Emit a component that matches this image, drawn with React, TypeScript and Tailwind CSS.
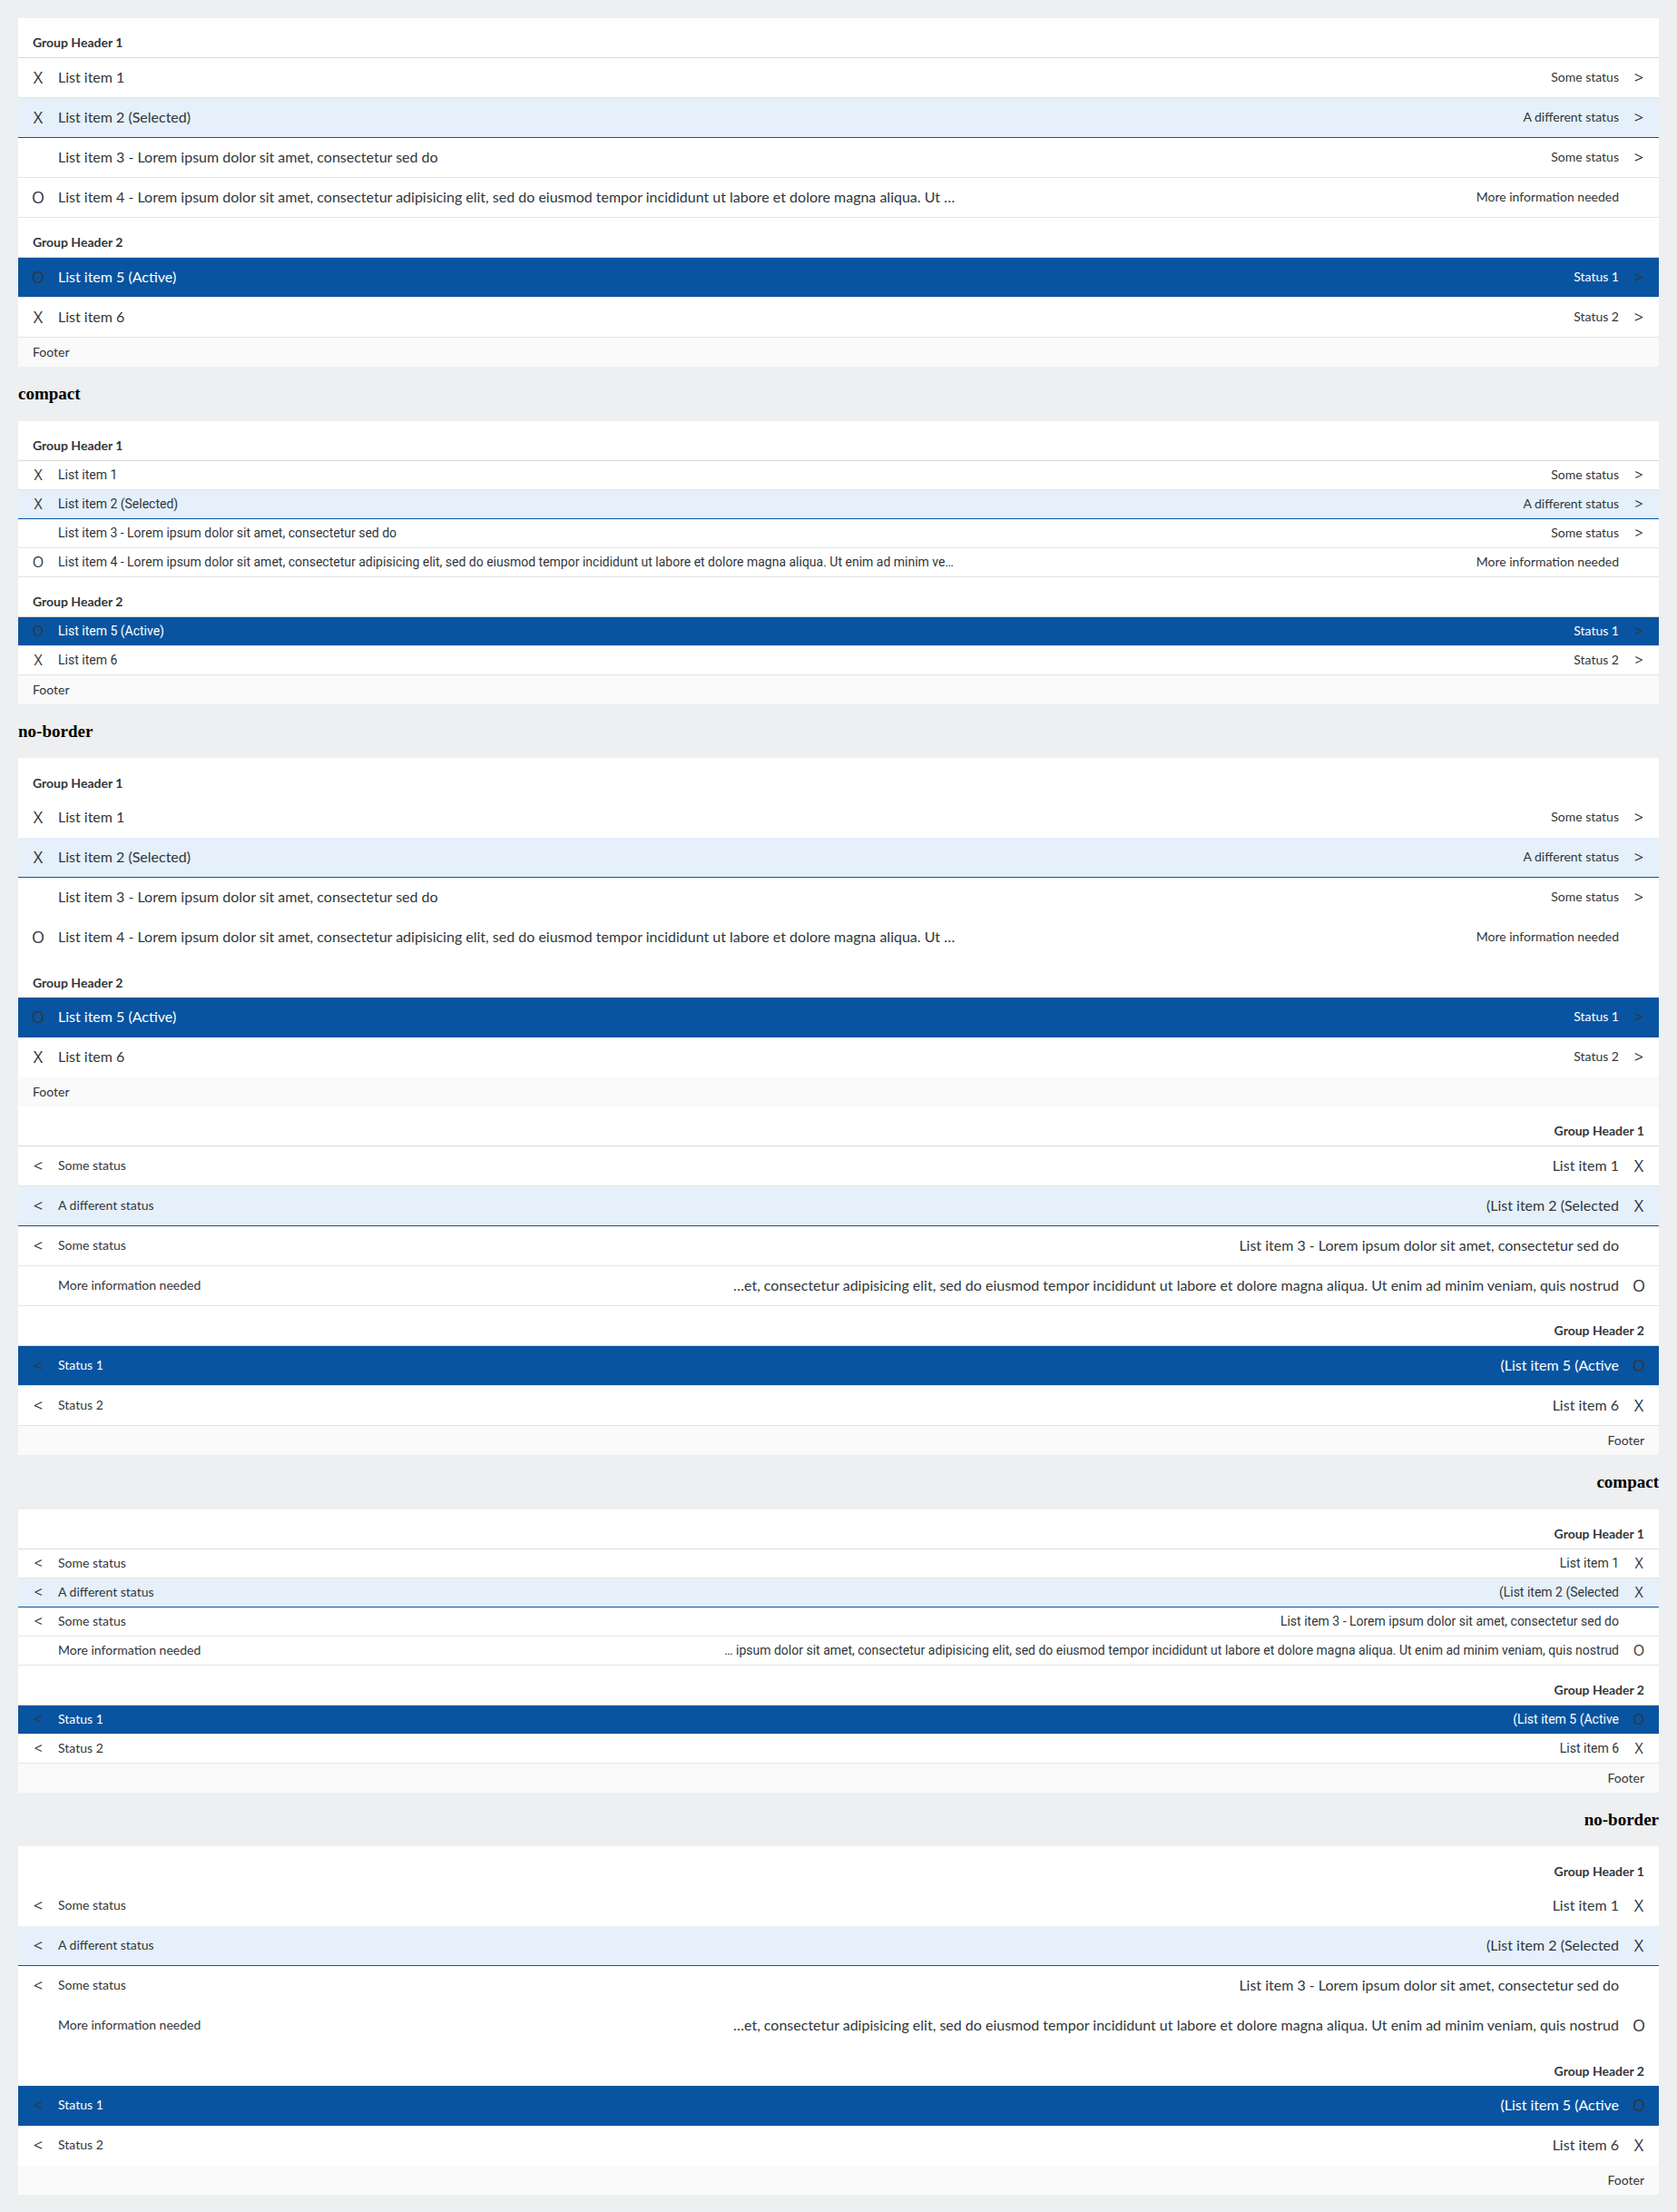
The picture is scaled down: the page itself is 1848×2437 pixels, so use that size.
type Item = {
  title: string;
  status: string;
  icon?: string;
  arrow?: boolean;
  state?: "selected" | "active";
};

type Variant = {
  compact?: boolean;
  borderless?: boolean;
  rtl?: boolean;
};

const groups: { header: string; items: Item[] }[] = [
  {
    header: "Group Header 1",
    items: [
      { icon: "X", title: "List item 1", status: "Some status", arrow: true },
      { icon: "X", title: "List item 2 (Selected)", status: "A different status", arrow: true, state: "selected" },
      { title: "List item 3 - Lorem ipsum dolor sit amet, consectetur sed do", status: "Some status", arrow: true },
      {
        icon: "O",
        title:
          "List item 4 - Lorem ipsum dolor sit amet, consectetur adipisicing elit, sed do eiusmod tempor incididunt ut labore et dolore magna aliqua. Ut enim ad minim veniam, quis nostrud",
        status: "More information needed",
      },
    ],
  },
  {
    header: "Group Header 2",
    items: [
      { icon: "O", title: "List item 5 (Active)", status: "Status 1", arrow: true, state: "active" },
      { icon: "X", title: "List item 6", status: "Status 2", arrow: true },
    ],
  },
];

// A closing bracket follows the direction of the list, so it is isolated from the title's text.
function Title({ text, rtl }: { text: string; rtl?: boolean }) {
  if (!rtl || !text.endsWith(")")) return <>{text}</>;
  return (
    <>
      {text.slice(0, -1)}
      <bdi dir="rtl">)</bdi>
    </>
  );
}

function Row({ item, compact, borderless, rtl }: { item: Item } & Variant) {
  const selected = item.state === "selected";
  const active = item.state === "active";
  const background = active ? "bg-[#0854a0] text-white" : selected ? "bg-[#e5f0fa]" : "bg-white";
  const border = selected
    ? "border-b border-[#0854a0]"
    : borderless
      ? ""
      : "border-b border-[#e4e4e4]";
  const icon = `flex w-3 shrink-0 justify-center font-['Open_Sans',sans-serif] leading-6 text-[#32363a] ${
    compact ? "text-[16px]" : "text-[18px]"
  }`;
  return (
    <li className={`flex items-center gap-4 px-4 pb-0.5 ${compact ? "h-8" : "h-11"} ${background} ${border}`}>
      <span className={icon}>{item.icon}</span>
      <div className="flex min-w-0 flex-1 items-center justify-between">
        <span
          className={`max-w-[57.5%] truncate leading-6 ${
            compact ? "font-[Roboto,sans-serif] text-[14px]" : "text-[16px]"
          }`}
        >
          <Title text={item.title} rtl={rtl} />
        </span>
        <span className="shrink-0 text-[14px] leading-6">{item.status}</span>
      </div>
      <span className={icon}>{item.arrow ? ">" : null}</span>
    </li>
  );
}

function List({ compact, borderless, rtl }: Variant) {
  return (
    <section className="bg-white font-[Lato,sans-serif] text-[#32363a]">
      {groups.map((group) => (
        <div key={group.header}>
          <h4
            className={`flex h-11 items-end px-4 pb-1.5 text-[14px] leading-5 font-bold ${
              borderless ? "" : "border-b border-[#d9d9d9]"
            }`}
          >
            {group.header}
          </h4>
          <ul>
            {group.items.map((item) => (
              <Row key={item.title} item={item} compact={compact} borderless={borderless} rtl={rtl} />
            ))}
          </ul>
        </div>
      ))}
      <footer className="flex h-8 items-center bg-[#fafafa] px-4 text-[14px] leading-5">Footer</footer>
    </section>
  );
}

function Examples({ rtl }: Variant) {
  const heading = "py-[19px] font-['Liberation_Serif',serif] text-[19px] font-bold text-black";
  return (
    <div dir={rtl ? "rtl" : "ltr"}>
      <List rtl={rtl} />
      <h3 className={`${heading} leading-[22px]`}>compact</h3>
      <List compact rtl={rtl} />
      <h3 className={`${heading} leading-[21px]`}>no-border</h3>
      <List borderless rtl={rtl} />
    </div>
  );
}

export default function App() {
  return (
    <main className="min-h-screen bg-[#edeff0] px-5 pt-5 pb-[18px]">
      <Examples />
      <Examples rtl />
    </main>
  );
}
